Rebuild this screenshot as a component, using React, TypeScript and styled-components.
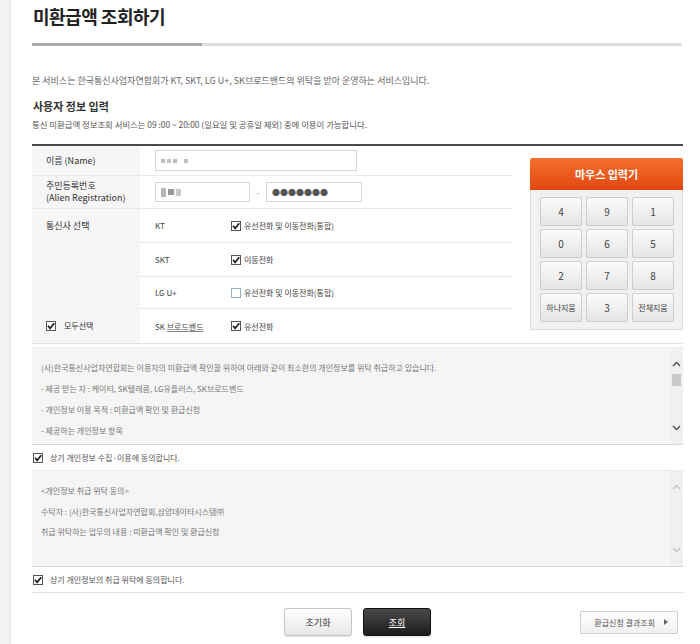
import React from "react";
import styled, { createGlobalStyle } from "styled-components";

const GlobalStyle = createGlobalStyle`
  html, body { margin: 0; padding: 0; background: #fff; }
  body { font-family: "Noto Sans CJK KR", "Noto Sans", sans-serif; color: #333; }
  * { box-sizing: border-box; }
`;

const Page = styled.div`
  display: flex;
  width: 700px;
  min-height: 644px;
  overflow: hidden;
`;

const SideStrip = styled.div`
  flex: none;
  width: 11px;
  background: #f2f2f2;
  border-right: 1px solid #e3e3e3;
`;

const Main = styled.main`
  flex: none;
  width: 651px;
  margin-left: 21px;
`;

const Title = styled.h1`
  margin: 4px 0 0 1px;
  font-size: 18px;
  line-height: 24px;
  font-weight: 700;
  letter-spacing: -0.5px;
  color: #222;
`;

const Progress = styled.div`
  display: flex;
  margin-top: 15px;
  height: 3px;
`;

const ProgressSeg = styled.div<{ $w: number; $c: string }>`
  width: ${(p) => p.$w}px;
  background: ${(p) => p.$c};
`;

const Intro = styled.p`
  margin: 29px 0 0;
  font-size: 9px;
  line-height: 12px;
  color: #666;
`;

const SectionTitle = styled.h2`
  margin: 12px 0 0 1px;
  font-size: 11px;
  line-height: 14px;
  font-weight: 700;
  color: #333;
`;

const Notice = styled.p`
  margin: 5px 0 0;
  font-size: 8.4px;
  line-height: 12px;
  color: #555;
`;

const FormArea = styled.section`
  margin-top: 14px;
  border-top: 2px solid #4a4a4a;
  border-bottom: 1px solid #e2e2e2;
  display: flex;
  align-items: flex-start;
`;

const FormTable = styled.div`
  flex: none;
  width: 481px;
`;

const FieldRow = styled.div<{ $h: number }>`
  display: grid;
  grid-template-columns: 108px 1fr;
  height: ${(p) => p.$h}px;
  border-bottom: 1px solid #e8e8e8;
`;

const LabelCell = styled.div`
  background: #f6f6f6;
  padding-left: 14px;
  display: flex;
  flex-direction: column;
  justify-content: center;
  font-size: 9px;
  line-height: 12px;
  color: #333;
`;

const ValueCell = styled.div`
  display: flex;
  align-items: center;
  padding-left: 15px;
`;

const TextInput = styled.div<{ $w: number; $h: number }>`
  width: ${(p) => p.$w}px;
  height: ${(p) => p.$h}px;
  border: 1px solid #d6d6d6;
  background: #fff;
  display: flex;
  align-items: center;
  padding-left: 5px;
`;

const Dash = styled.span`
  width: 16px;
  text-align: center;
  font-size: 8px;
  color: #888;
`;

const Dots = styled.span`
  font-size: 8px;
  color: #555;
  letter-spacing: 0;
`;

const BlurBlocks = styled.span`
  display: inline-flex;
  align-items: center;
  gap: 2px;
  filter: blur(0.5px);
`;

const BlurBlock = styled.span<{ $w: number; $h: number; $c: string }>`
  display: inline-block;
  width: ${(p) => p.$w}px;
  height: ${(p) => p.$h}px;
  background: ${(p) => p.$c};
`;

const CarrierRow = styled.div<{ $h: number }>`
  display: grid;
  grid-template-columns: 108px 91px 1fr;
  height: ${(p) => p.$h}px;
`;

const CarrierName = styled.div<{ $last?: boolean }>`
  display: flex;
  align-items: center;
  padding-left: 15px;
  font-size: 8px;
  color: #444;
  border-bottom: ${(p) => (p.$last ? "none" : "1px solid #e8e8e8")};
`;

const CarrierOption = styled.label<{ $last?: boolean }>`
  display: flex;
  align-items: center;
  gap: 3px;
  font-size: 8px;
  color: #444;
  border-bottom: ${(p) => (p.$last ? "none" : "1px solid #e8e8e8")};
`;

const Under = styled.span`
  text-decoration: underline;
  text-decoration-color: #888;
`;

const AllSelect = styled.span`
  display: flex;
  align-items: center;
  gap: 8px;
  font-size: 8px;
`;

const Keypad = styled.div`
  flex: none;
  width: 153px;
  margin: 12px 0 0 17px;
`;

const KeypadHeader = styled.div`
  height: 32px;
  border-radius: 2px 2px 0 0;
  background: linear-gradient(#f3702f, #e2470f);
  color: #fff;
  font-size: 11px;
  font-weight: 700;
  display: flex;
  align-items: center;
  justify-content: center;
`;

const KeypadBody = styled.div`
  background: #f1f1f1;
  border: 1px solid #dcdcdc;
  border-top: none;
  padding: 7px 8px 7px 9px;
  display: grid;
  grid-template-columns: repeat(3, 42px);
  grid-auto-rows: 29px;
  gap: 3px 4px;
`;

const Key = styled.button<{ $small?: boolean }>`
  border: 1px solid #cdcdcd;
  border-radius: 2px;
  background: linear-gradient(#fbfbfb, #e5e5e5);
  color: #444;
  font-family: inherit;
  font-size: ${(p) => (p.$small ? "8px" : "10px")};
  padding: 0;
`;

const AgreeBox = styled.div<{ $h: number; $mt: number }>`
  margin-top: ${(p) => p.$mt}px;
  height: ${(p) => p.$h}px;
  display: flex;
  background: #f5f5f5;
  border-top: 1px solid #ececec;
  border-bottom: 1px solid #d8d8d8;
  overflow: hidden;
`;

const AgreeText = styled.div<{ $lh: number; $pt: number }>`
  flex: 1;
  padding: ${(p) => p.$pt}px 0 0 9px;
  font-size: 8px;
  line-height: ${(p) => p.$lh}px;
  color: #777;
  p { margin: 0; }
`;

const ScrollTrack = styled.div`
  flex: none;
  width: 13px;
  background: #f0f0f0;
  display: flex;
  flex-direction: column;
  align-items: center;
  padding: 12px 0;
`;

const Thumb = styled.div`
  width: 9px;
  height: 12px;
  margin-top: 6px;
  background: #c9c9c9;
`;

const Spacer = styled.div`
  flex: 1;
`;

const CheckLine = styled.label<{ $rule?: boolean }>`
  display: flex;
  align-items: center;
  gap: 7px;
  height: ${(p) => (p.$rule ? 26 : 25)}px;
  padding-left: 1px;
  font-size: 8px;
  color: #555;
  border-bottom: ${(p) => (p.$rule ? "1px solid #e0e0e0" : "none")};
`;

const ButtonBar = styled.div`
  margin-top: 15px;
  display: grid;
  grid-template-columns: 1fr auto 1fr;
  align-items: center;
`;

const ButtonGroup = styled.div`
  grid-column: 2;
  display: flex;
  gap: 11px;
`;

const ActionButton = styled.button<{ $dark?: boolean }>`
  width: 68px;
  height: 28px;
  border-radius: 3px;
  font-family: inherit;
  font-size: 9px;
  padding: 0;
  border: 1px solid ${(p) => (p.$dark ? "#111" : "#c6c6c6")};
  background: ${(p) =>
    p.$dark ? "linear-gradient(#4a4a4a, #1c1c1c)" : "linear-gradient(#ffffff, #e6e6e6)"};
  color: ${(p) => (p.$dark ? "#fff" : "#333")};
  text-decoration: ${(p) => (p.$dark ? "underline" : "none")};
  box-shadow: 0 1px 1px rgba(0, 0, 0, 0.12);
`;

const ResultButton = styled.button`
  justify-self: end;
  margin-right: 5px;
  height: 23px;
  padding: 0 9px 0 13px;
  border: 1px solid #cfcfcf;
  border-radius: 1px;
  background: linear-gradient(#ffffff, #f0f0f0);
  font-family: inherit;
  font-size: 8px;
  color: #555;
  display: flex;
  align-items: center;
  gap: 9px;
`;

const Check = ({ on = true }: { on?: boolean }) => (
  <svg width="10" height="10" viewBox="0 0 10 10" style={{ flex: "none" }}>
    <rect x="0.5" y="0.5" width="9" height="9" fill="#fff" stroke={on ? "#555" : "#8fb4c8"} />
    {on && <path d="M2 4.8 L4.1 7.3 L8.3 2.2" fill="none" stroke="#1e1e1e" strokeWidth="1.7" />}
  </svg>
);

const Chevron = ({ up, color }: { up?: boolean; color: string }) => (
  <svg width="9" height="8" viewBox="0 0 9 8">
    <polyline
      points={up ? "1,6 4.5,2.5 8,6" : "1,2 4.5,5.5 8,2"}
      fill="none"
      stroke={color}
      strokeWidth="1.5"
    />
  </svg>
);

const Caret = () => (
  <svg width="4" height="6" viewBox="0 0 4 6">
    <path d="M0 0 L4 3 L0 6 Z" fill="#666" />
  </svg>
);

const keys: { label: string; small?: boolean }[] = [
  { label: "4" }, { label: "9" }, { label: "1" },
  { label: "0" }, { label: "6" }, { label: "5" },
  { label: "2" }, { label: "7" }, { label: "8" },
  { label: "하나지움", small: true }, { label: "3" }, { label: "전체지움", small: true },
];

export default function App() {
  return (
    <>
      <GlobalStyle />
      <Page>
        <SideStrip />
        <Main>
          <Title>미환급액 조회하기</Title>
          <Progress>
            <ProgressSeg $w={170} $c="#ababab" />
            <ProgressSeg $w={480} $c="#dedede" />
          </Progress>
          <Intro>
            본 서비스는 한국통신사업자연합회가 KT, SKT, LG U+, SK브로드밴드의 위탁을 받아 운영하는 서비스입니다.
          </Intro>
          <SectionTitle>사용자 정보 입력</SectionTitle>
          <Notice>
            통신 미환급액 정보조회 서비스는 09 :00 ~ 20:00 (일요일 및 공휴일 제외) 중에 이용이 가능합니다.
          </Notice>

          <FormArea>
            <FormTable>
              <FieldRow $h={30}>
                <LabelCell>이름 (Name)</LabelCell>
                <ValueCell>
                  <TextInput $w={202} $h={21}>
                    <BlurBlocks>
                      <BlurBlock $w={4} $h={4} $c="#bbb" />
                      <BlurBlock $w={4} $h={4} $c="#c4c4c4" />
                      <BlurBlock $w={4} $h={4} $c="#bbb" />
                      <BlurBlock $w={3} $h={4} $c="#fff" />
                      <BlurBlock $w={4} $h={4} $c="#bdbdbd" />
                    </BlurBlocks>
                  </TextInput>
                </ValueCell>
              </FieldRow>
              <FieldRow $h={33}>
                <LabelCell>
                  <span>주민등록번호</span>
                  <span>(Alien Registration)</span>
                </LabelCell>
                <ValueCell>
                  <TextInput $w={95} $h={20}>
                    <BlurBlocks>
                      <BlurBlock $w={5} $h={9} $c="#b5b5b5" />
                      <BlurBlock $w={6} $h={6} $c="#9a9a9a" />
                      <BlurBlock $w={5} $h={7} $c="#c8c8c8" />
                    </BlurBlocks>
                  </TextInput>
                  <Dash>-</Dash>
                  <TextInput $w={96} $h={20}>
                    <Dots>●●●●●●●</Dots>
                  </TextInput>
                </ValueCell>
              </FieldRow>

              <CarrierRow $h={34}>
                <LabelCell>통신사 선택</LabelCell>
                <CarrierName>KT</CarrierName>
                <CarrierOption>
                  <Check />
                  유선전화 및 이동전화(통합)
                </CarrierOption>
              </CarrierRow>
              <CarrierRow $h={34}>
                <LabelCell />
                <CarrierName>SKT</CarrierName>
                <CarrierOption>
                  <Check />
                  이동전화
                </CarrierOption>
              </CarrierRow>
              <CarrierRow $h={32}>
                <LabelCell />
                <CarrierName>LG U+</CarrierName>
                <CarrierOption>
                  <Check on={false} />
                  유선전화 및 이동전화(통합)
                </CarrierOption>
              </CarrierRow>
              <CarrierRow $h={34}>
                <LabelCell>
                  <AllSelect>
                    <Check />
                    모두선택
                  </AllSelect>
                </LabelCell>
                <CarrierName $last>
                  SK&nbsp;<Under>브로드밴드</Under>
                </CarrierName>
                <CarrierOption $last>
                  <Check />
                  유선전화
                </CarrierOption>
              </CarrierRow>
            </FormTable>

            <Keypad>
              <KeypadHeader>마우스 입력기</KeypadHeader>
              <KeypadBody>
                {keys.map((k) => (
                  <Key key={k.label} $small={k.small}>
                    {k.label}
                  </Key>
                ))}
              </KeypadBody>
            </Keypad>
          </FormArea>

          <AgreeBox $h={98} $mt={3}>
            <AgreeText $lh={21} $pt={9}>
              <p>(사)한국통신사업자연합회는 이용자의 미환급액 확인을 위하여 아래와 같이 최소한의 개인정보를 위탁 취급하고 있습니다.</p>
              <p>- 제공 받는 자 : 케이티, SK텔레콤, LG유플러스, SK브로드밴드</p>
              <p>- 개인정보 이용 목적 : 미환급액 확인 및 환급신청</p>
              <p>- 제공하는 개인정보 항목</p>
            </AgreeText>
            <ScrollTrack>
              <Chevron up color="#555" />
              <Thumb />
              <Spacer />
              <Chevron color="#555" />
            </ScrollTrack>
          </AgreeBox>
          <CheckLine>
            <Check />
            상기 개인정보 수집·이용에 동의합니다.
          </CheckLine>

          <AgreeBox $h={97} $mt={0}>
            <AgreeText $lh={20.5} $pt={10}>
              <p>&lt;개인정보 취급 위탁 동의&gt;</p>
              <p>수탁자 : (사)한국통신사업자연합회,삼양데이타시스템㈜</p>
              <p>취급 위탁하는 업무의 내용 : 미환급액 확인 및 환급신청</p>
            </AgreeText>
            <ScrollTrack>
              <Chevron up color="#c4c4c4" />
              <Spacer />
              <Chevron color="#c4c4c4" />
            </ScrollTrack>
          </AgreeBox>
          <CheckLine $rule>
            <Check />
            상기 개인정보의 취급 위탁에 동의합니다.
          </CheckLine>

          <ButtonBar>
            <ButtonGroup>
              <ActionButton>초기화</ActionButton>
              <ActionButton $dark>조회</ActionButton>
            </ButtonGroup>
            <ResultButton>
              환급신청 결과조회
              <Caret />
            </ResultButton>
          </ButtonBar>
        </Main>
      </Page>
    </>
  );
}
